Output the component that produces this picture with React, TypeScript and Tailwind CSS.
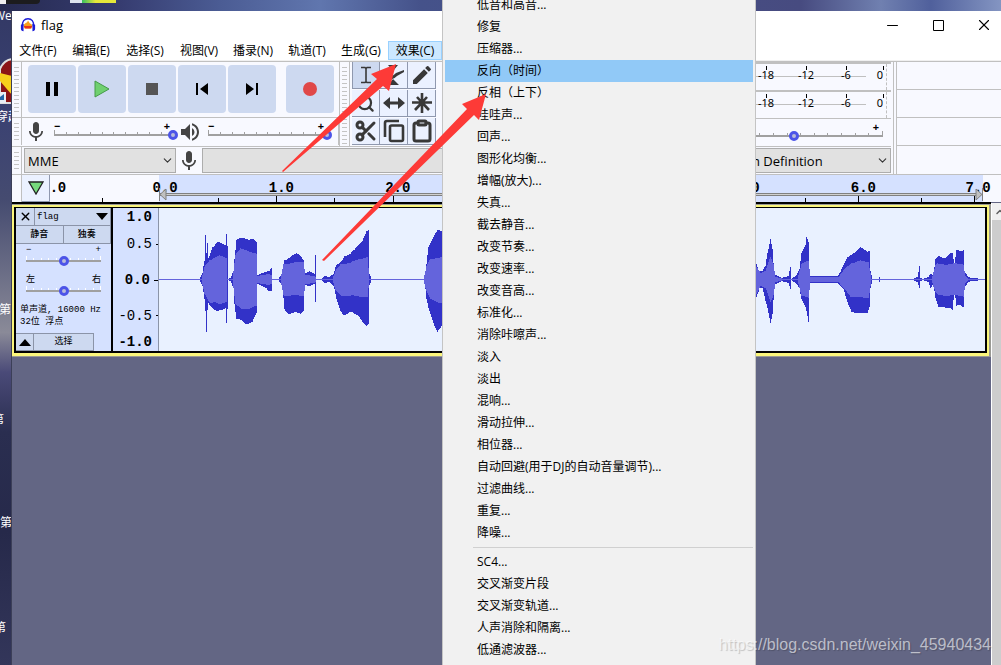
import React from "react";
import { Scissors, Copy, Clipboard, Search, ChevronDown, ChevronUp, Minus, Square, X } from "lucide-react";
import { MdMic, MdVolumeUp, MdEdit } from "react-icons/md";

const menus = ["文件(F)", "编辑(E)", "选择(S)", "视图(V)", "播录(N)", "轨道(T)", "生成(G)", "效果(C)"];

const effects = [
  "低音和高音...",
  "修复",
  "压缩器...",
  "反向（时间）",
  "反相（上下）",
  "哇哇声...",
  "回声...",
  "图形化均衡...",
  "增幅(放大)...",
  "失真...",
  "截去静音...",
  "改变节奏...",
  "改变速率...",
  "改变音高...",
  "标准化...",
  "消除咔嚓声...",
  "淡入",
  "淡出",
  "混响...",
  "滑动拉伸...",
  "相位器...",
  "自动回避(用于DJ的自动音量调节)...",
  "过滤曲线...",
  "重复...",
  "降噪...",
];

const plugins = ["SC4...", "交叉渐变片段", "交叉渐变轨道...", "人声消除和隔离...", "低通滤波器..."];

// [x, height above the centre line, height below it]
type Point = [number, number, number];

const peaks: Point[] = [
  [0, 0, 0], [40, 0, 0], [43, 6, 6], [45, 17, 20], [46, 43, 32], [47, 26, 52], [48, 36, 30], [49, 22, 22],
  [53, 33, 27], [58, 36, 32], [63, 34, 31], [66, 34, 28], [67, 46, 42], [68, 34, 28], [69, 0, 0], [71, 1, 1],
  [74, 8, 8], [75, 20, 24], [77, 38, 40], [86, 41, 43], [93, 41, 41], [97, 36, 34], [98, 4, 4], [103, 6, 6],
  [109, 8, 9], [112, 12, 10], [113, 0, 0], [119, 0, 0], [123, 6, 6], [125, 20, 28], [129, 22, 33], [137, 24, 34],
  [141, 23, 34], [144, 20, 30], [145, 5, 5], [150, 8, 6], [155, 5, 4], [156, 22, 24], [157, 0, 0], [162, 0, 0],
  [165, 3, 3], [170, 2, 2], [174, 5, 6], [177, 13, 20], [181, 18, 30], [185, 24, 34], [191, 24, 33], [195, 28, 35],
  [199, 35, 35], [203, 40, 40], [207, 48, 46], [209, 48, 45], [210, 5, 5], [212, 0, 0], [265, 0, 0], [267, 14, 20],
  [269, 30, 30], [275, 45, 45], [278, 51, 50], [283, 48, 45], [340, 30, 30], [588, 30, 26], [597, 17, 15],
  [600, 8, 8], [603, 8, 8], [606, 12, 22], [608, 24, 30], [611, 39, 44], [613, 30, 34], [615, 4, 4], [619, 3, 3],
  [622, 1, 1], [629, 3, 3], [631, 12, 9], [632, 0, 0], [637, 4, 4], [640, 10, 8], [642, 25, 20], [646, 32, 29],
  [647, 41, 32], [649, 37, 42], [650, 3, 3], [665, 3, 3], [678, 3, 3], [683, 10, 8], [688, 22, 22], [692, 26, 30],
  [701, 30, 35], [708, 28, 32], [710, 30, 25], [711, 8, 8], [713, 0, 0], [719, 0, 0], [720, 2, 2], [721, 0, 0],
  [754, 0, 0], [758, 2, 2], [760, 12, 8], [761, 1, 1], [763, 0, 0], [769, 2, 2], [771, 5, 8], [774, 4, 4],
  [776, 18, 20], [779, 22, 28], [785, 22, 26], [790, 26, 27], [793, 25, 31], [795, 12, 12], [797, 28, 27],
  [801, 28, 25], [804, 30, 26], [805, 8, 8], [808, 3, 3], [811, 1, 1], [817, 1, 1], [820, 0, 0], [826, 0, 0],
];

const rms: Point[] = [
  [0, 0, 0], [42, 0, 0], [45, 12, 14], [50, 19, 22], [56, 22, 22], [60, 23, 25], [67, 21, 22], [68, 0, 0],
  [73, 0, 0], [76, 24, 24], [81, 30, 29], [87, 29, 29], [97, 25, 26], [98, 3, 3], [109, 5, 5], [112, 4, 4],
  [113, 0, 0], [121, 0, 0], [124, 15, 15], [144, 17, 16], [146, 4, 4], [155, 3, 3], [157, 0, 0], [173, 0, 0],
  [176, 8, 10], [181, 15, 15], [191, 16, 16], [199, 20, 16], [208, 22, 17], [210, 0, 0], [264, 0, 0], [267, 12, 12],
  [271, 20, 19], [281, 22, 23], [340, 15, 15], [590, 15, 15], [597, 13, 13], [601, 6, 6], [606, 8, 8], [611, 22, 22],
  [614, 15, 15], [616, 2, 2], [625, 0, 0], [638, 0, 0], [642, 15, 16], [649, 18, 18], [651, 2, 2], [679, 2, 2],
  [683, 7, 7], [691, 16, 16], [701, 18, 18], [709, 17, 18], [712, 0, 0], [772, 0, 0], [776, 13, 13], [778, 15, 15],
  [804, 15, 16], [806, 3, 3], [809, 0, 0], [826, 0, 0],
];

const wavePath = (points: Point[], roughness: number) => {
  const top: string[] = [];
  const bottom: string[] = [];
  let seg = 0;
  for (let x = 0; x < 826; x++) {
    while (seg < points.length - 2 && points[seg + 1][0] <= x) seg++;
    const [x0, u0, d0] = points[seg];
    const [x1, u1, d1] = points[seg + 1];
    const t = (x - x0) / (x1 - x0);
    const up = u0 + (u1 - u0) * t;
    const down = d0 + (d1 - d0) * t;
    const noise = Math.sin(x * 12.9) * roughness;
    const u = Math.max(0, Math.round(up + (up > 8 ? noise : 0)));
    const d = Math.max(0, Math.round(down + (down > 8 ? -noise : 0)));
    top.push(`L${x} ${71 - u}H${x + 1}`);
    bottom.unshift(`L${x + 1} ${72 + d}H${x}`);
  }
  return `M0 71${top.join("")}${bottom.join("")}Z`;
};

interface SliderProps {
  label: string;
  value: number;
  low?: string;
  high?: string;
  ticks?: number;
  className?: string;
  small?: boolean;
}

const Slider: React.FC<SliderProps> = ({ label, value, low = "−", high = "+", ticks = 11, className = "", small }) => {
  return (
    <div className={`flex flex-col ${className}`}>
      <div className={`flex justify-between ${small ? "h-3 text-[9px] leading-3" : "h-2 pr-2 text-[11px] leading-2 font-bold"}`}>
        <span>{low}</span>
        <span>{high}</span>
      </div>
      <div className="relative h-3">
        <div className={`flex h-1.5 items-end justify-between border-b-2 border-[#a0a0a0] ${small ? "" : "mr-1"}`}>
          {Array.from({ length: ticks }, (_, i) => (
            <span
              key={i}
              className={`w-px ${small ? "bg-white" : "bg-[#a0a0a0]"} ${i === 0 || i === ticks - 1 ? "h-1" : "h-0.5"}`}
            />
          ))}
        </div>
        <input
          type="range"
          aria-label={label}
          min={0}
          max={100}
          defaultValue={value}
          className="absolute inset-x-0 top-0 m-0 h-2.5 w-full appearance-none bg-transparent [&::-webkit-slider-thumb]:h-2.5 [&::-webkit-slider-thumb]:w-2.5 [&::-webkit-slider-thumb]:appearance-none [&::-webkit-slider-thumb]:rounded-full [&::-webkit-slider-thumb]:border-3 [&::-webkit-slider-thumb]:border-[#4c54e8] [&::-webkit-slider-thumb]:bg-[#b9bcd8]"
        />
      </div>
    </div>
  );
};

const Grip = () => (
  <div className="flex w-2.5 shrink-0 flex-col border-r border-[#c0c0c0] p-0.5">
    <span className="flex-1 bg-[repeating-linear-gradient(transparent_0_3px,#c4c4c4_3px_4px)]" />
  </div>
);

const TransportButton: React.FC<{ label: string; className?: string; children: React.ReactNode }> = ({
  label,
  className = "",
  children,
}) => (
  <button aria-label={label} className={`flex size-12 items-center justify-center rounded bg-[#cdd9f0] ${className}`}>
    <svg width="20" height="20" viewBox="0 0 20 20">
      {children}
    </svg>
  </button>
);

const ToolButton: React.FC<{ label: string; active?: boolean; children: React.ReactNode }> = ({ label, active, children }) => (
  <button
    aria-label={label}
    className={`flex h-[27px] w-7 items-center justify-center border-r border-b border-[#8f98ae] text-[#383838] ${
      active ? "bg-[#cdd9f0] border-l" : "bg-[#ebf1ff]"
    }`}
  >
    {children}
  </button>
);

const Device: React.FC<{ label: string; value: string; className: string }> = ({ label, value, className }) => (
  <div className={`relative ${className}`}>
    <select
      aria-label={label}
      className="block h-[25px] w-full appearance-none border border-[#adadad] bg-[#e1e1e1] pl-[3px] text-[13px] leading-5"
    >
      <option>{value}</option>
    </select>
    <ChevronDown size={13} strokeWidth={2} className="pointer-events-none absolute top-1.5 right-0.5 text-[#333]" />
  </div>
);

const Meter: React.FC = () => (
  <div className="relative flex h-7 justify-end overflow-hidden border-t-2 border-[#c0c0c0]">
    <div className="mr-1 flex flex-1 justify-end overflow-hidden border-r border-dashed border-[#c0c0c0] font-['Noto_Sans',sans-serif] text-[11px] leading-2.5">
      {["-36", "-30", "-24", "-18", "-12", "-6"].map((db) => (
        <div key={db} className="flex w-10 shrink-0 flex-col items-center">
          <span className="mt-0.5 h-1 w-px shrink-0 bg-black" />
          <span className="w-full bg-[linear-gradient(#c0c0c0,#c0c0c0)] bg-size-[100%_1px] bg-position-[0_6px] bg-no-repeat text-center">
            {db}
          </span>
        </div>
      ))}
      <div className="flex w-5 shrink-0 flex-col items-end pr-0.5">
        <span className="mt-0.5 h-1 w-px shrink-0 bg-black" />
        <span className="mr-px">0</span>
      </div>
    </div>
  </div>
);

const Timeline: React.FC = () => (
  <div className="flex h-7 border-t border-[#c0c0c0] bg-[#f8f9ff]">
    <div className="w-2.5 border-r border-[#c0c0c0]" />
    <button aria-label="播放头" className="flex w-7 items-center justify-center border-r border-b border-[#8f98ae] bg-[#ebf1ff]">
      <svg width="16" height="14" viewBox="0 0 16 14">
        <path d="M1 1H15L8 13Z" fill="#76d97c" stroke="#222" strokeWidth="1.3" />
      </svg>
    </button>
    <svg viewBox="50 175 951 27" preserveAspectRatio="none" className="h-[27px] min-w-0 flex-1">
      <rect x="159" y="175" width="824" height="27" fill="#d5e1ff" />
      <g fontFamily="'Liberation Mono', monospace" fontSize="14" fontWeight="bold" textAnchor="middle">
        <text x="54" y="192">.</text>
        <text x="62" y="192">0</text>
        {[0, 1, 2, 3, 4, 5, 6, 7].map((s) => (
          <text key={s} x={s === 7 ? 978 : 165 + s * 116.4} y="192">{`${s}.0`}</text>
        ))}
      </g>
      <path d="M160 193.5H981M160 195.5H981" stroke="#808080" />
      <path d="M160 194.5H981" stroke="#d0d0d0" />
      <path d="M159.5 188V201M982.5 188V201" stroke="#808080" />
      <path d="M166 189V200L160 194.500ZM976 189V200L982 194.500Z" fill="#c0c0c0" stroke="#808080" />
      <path
        d="M102.500 198V202M218.500 198V202M276.500 196V202M334.500 198V202M393.500 196V202M451.500 198V202M805.500 198V202M858.500 196V202M921.500 198V202M974.500 196V202"
        stroke="#000"
      />
    </svg>
  </div>
);

const TrackPanel: React.FC = () => {
  const cell = "border-r border-b border-[#8b94a8] bg-[#cdd9f0]";
  return (
    <div className="flex w-[97px] shrink-0 flex-col border-r-2 border-black bg-[#d5e1ff] font-['Liberation_Mono','Noto_Sans_CJK_SC',monospace] text-[9px] leading-3">
      <div className="flex h-[18px]">
        <button aria-label="关闭" className={`flex w-[19px] items-center justify-center ${cell}`}>
          <X size={13} strokeWidth={2.5} />
        </button>
        <button className={`flex flex-1 items-center justify-between px-0.5 ${cell}`}>
          flag
          <svg width="12" height="7" viewBox="0 0 12 7">
            <path d="M0 0H12L6 7Z" />
          </svg>
        </button>
      </div>
      <div className="flex h-[18px] font-medium">
        <button className={`flex-1 ${cell}`}>静音</button>
        <button className={`flex-1 ${cell}`}>独奏</button>
      </div>
      <Slider small label="增益" value={50} className="mx-2.5" />
      <Slider small label="声像" value={50} low="左" high="右" className="mx-2.5 mt-1.5" />
      <p className="mt-1.5 pl-1 whitespace-nowrap">
        单声道, 16000 Hz
        <br />
        32位 浮点
      </p>
      <div className="mt-auto flex h-[18px]">
        <button aria-label="折叠" className={`flex w-[18px] items-center justify-center border-t ${cell}`}>
          <svg width="12" height="7" viewBox="0 0 12 7">
            <path d="M0 7H12L6 0Z" />
          </svg>
        </button>
        <button className={`w-[60px] border-t ${cell}`}>选择</button>
      </div>
    </div>
  );
};

const rulerMark = "flex items-center justify-end gap-1";

const Track: React.FC = () => (
  <section className="flex flex-1 border-2 border-b-[3px] border-[#fbf67c] bg-black px-0.5 pt-px pb-0.5">
    <TrackPanel />
    <div className="grid h-[143px] w-[46px] shrink-0 grid-rows-[18px_36px_36px_35px_18px] border-r border-[#8b94a8] bg-[#d5e1ff] font-['Liberation_Mono',monospace] text-sm">
      <div className={`${rulerMark} mr-1.5 font-bold`}>1.0</div>
      <div className={rulerMark}>
        0.5<span className="h-px w-0.5 bg-black" />
      </div>
      <div className={`${rulerMark} font-bold`}>
        0.0<span className="h-px w-1 bg-black" />
      </div>
      <div className={rulerMark}>
        -0.5<span className="h-px w-0.5 bg-black" />
      </div>
      <div className={`${rulerMark} mr-1.5 font-bold`}>-1.0</div>
    </div>
    <svg
      viewBox="0 0 826 143"
      preserveAspectRatio="none"
      shapeRendering="crispEdges"
      className="h-[143px] min-w-0 flex-1 bg-[#e9f1ff]"
    >
      <path d={wavePath(peaks, 1.6)} fill="#3232c8" />
      <path d={wavePath(rms, 0.6)} fill="#6464dc" />
    </svg>
  </section>
);

const Toolbars: React.FC = () => (
  <div className="flex border-t border-[#c0c0c0] bg-[#f8f9ff]">
    <div className="min-w-0 flex-1">
      <div className="flex">
        {/* Transport and mixer */}
        <div className="w-[327px] shrink-0">
          <div className="flex h-[55px]">
            <Grip />
            <div className="flex gap-0.5 py-[3px] pl-1.5">
              <TransportButton label="暂停">
                <path d="M4 3H8V17H4ZM12 3H16V17H12Z" />
              </TransportButton>
              <TransportButton label="播放">
                <path d="M3 2V18L17 10Z" fill="#6fd06f" stroke="#459a49" />
              </TransportButton>
              <TransportButton label="停止">
                <path d="M4 4H16V16H4Z" fill="#555" />
              </TransportButton>
              <TransportButton label="跳至开头">
                <path d="M4 4H6V16H4ZM16 4V16L8 10Z" />
              </TransportButton>
              <TransportButton label="跳至结尾">
                <path d="M14 4H16V16H14ZM4 4V16L12 10Z" />
              </TransportButton>
              <TransportButton label="录制" className="ml-2">
                <circle cx="10" cy="10" r="7" fill="#e04848" />
              </TransportButton>
            </div>
          </div>
          <div className="flex h-7 border-t border-r border-[#c0c0c0]">
            <Grip />
            <MdMic size={24} className="mt-0.5 ml-0.5 shrink-0 text-[#444]" />
            <Slider label="录制音量" value={100} className="mt-1 ml-1.5 w-[124px]" />
            <MdVolumeUp size={24} className="mt-0.5 shrink-0 text-[#444]" />
            <Slider label="播放音量" value={100} className="mt-1 ml-1.5 w-[124px]" />
          </div>
        </div>
        {/* Tools and editing */}
        <div className="flex w-[103px] shrink-0 border-l border-[#c0c0c0]">
          <Grip />
          <div className="grid grid-cols-[28px_28px_28px] content-start gap-y-px pl-0.5">
            <ToolButton label="选择工具" active>
              <svg width="14" height="18" viewBox="0 0 14 18" fill="none" stroke="currentColor" strokeWidth="1.6">
                <path d="M2 1.500H6L7 2.500L8 1.500H12M7 2V16M2 16.500H6L7 15.500L8 16.500H12" />
              </svg>
            </ToolButton>
            <ToolButton label="包络工具">
              <svg width="22" height="22" viewBox="0 0 22 22" fill="currentColor">
                <path d="M5 1H15L10 7ZM5 21L10 15L16 21ZM2 14C7 13 10 12 13 9L21 6V8L14 12C11 15 7 16 2 16Z" />
              </svg>
            </ToolButton>
            <ToolButton label="绘制工具">
              <MdEdit size={24} />
            </ToolButton>
            <ToolButton label="缩放工具">
              <Search size={19} strokeWidth={2.8} />
            </ToolButton>
            <ToolButton label="时间移动工具">
              <svg width="22" height="14" viewBox="0 0 22 14" fill="currentColor">
                <path d="M0 7L7 1V5.500H15V1L22 7L15 13V8.500H7V13Z" />
              </svg>
            </ToolButton>
            <ToolButton label="多功能工具">
              <svg width="20" height="20" viewBox="0 0 20 20" stroke="currentColor" strokeWidth="2.6">
                <path d="M10 0V20M0 9.500H20M3 17L10 9.500L17 17M5 4L10 9.500L15 4" fill="none" />
              </svg>
            </ToolButton>
            <ToolButton label="剪切">
              <Scissors size={24} strokeWidth={3} />
            </ToolButton>
            <ToolButton label="复制">
              <svg width="22" height="24" viewBox="0 0 22 24" fill="none" stroke="currentColor" strokeWidth="2.6">
                <path d="M2 18V4Q2 2 4 2H16" />
                <rect x="7" y="6.500" width="13" height="15.500" rx="1.500" />
              </svg>
            </ToolButton>
            <ToolButton label="粘贴">
              <Clipboard size={24} strokeWidth={3} />
            </ToolButton>
          </div>
        </div>
        {/* Meters and playback speed */}
        <div className="min-w-0 flex-1">
          <Meter />
          <Meter />
          <div className="flex h-7 justify-end border-t border-[#c0c0c0]">
            <Slider label="播放速度" value={49} ticks={14} className="mt-1 mr-1 w-[182px]" />
          </div>
        </div>
      </div>
      {/* Devices */}
      <div className="flex h-7 items-center border-t border-[#c0c0c0]">
        <div className="flex self-stretch">
          <Grip />
        </div>
        <Device label="音频主机" value="MME" className="ml-0.5 w-[152px]" />
        <MdMic size={24} className="mx-px shrink-0 text-[#444]" />
        <Device label="录制设备" value="" className="mr-7 min-w-0 flex-1" />
        <Device label="播放设备" value="High Definition" className="w-[163px]" />
      </div>
    </div>
    <div className="ml-0.5 grid w-[108px] shrink-0 grid-rows-4 divide-y divide-[#c0c0c0] border-l border-[#c0c0c0]">
      {[0, 1, 2, 3].map((i) => (
        <div key={i} className="ml-0.5 border-l border-l-[#c0c0c0]" />
      ))}
    </div>
  </div>
);

const EffectMenu: React.FC = () => (
  <div
    role="menu"
    className="absolute -top-[7px] left-[442px] flex h-[680px] w-[314px] flex-col border border-[#c4c4c4] bg-[#f1f1f1] px-0.5 text-xs"
  >
    {effects.map((name) => (
      <button
        key={name}
        role="menuitem"
        className={`h-[22px] shrink-0 pl-8 text-left ${name === "反向（时间）" ? "bg-[#91c9f7]" : ""}`}
      >
        {name}
      </button>
    ))}
    <hr className="my-[3px] ml-7 border-[#d0d0d0]" />
    {plugins.map((name) => (
      <button key={name} role="menuitem" className="h-[22px] shrink-0 pl-8 text-left">
        {name}
      </button>
    ))}
  </div>
);

const Desktop: React.FC = () => (
  <div className="absolute inset-0 overflow-hidden font-['Open_Sans','Noto_Sans_CJK_SC',sans-serif] text-xs whitespace-nowrap text-white">
    <div className="absolute inset-0 bg-[linear-gradient(#323864,#3b4272_18%,#454b70_30%,#8a8a98_50%,#4a4a78_56%,#2a2e50_65%,#26294a_80%,#33365a)]" />
    <div className="absolute inset-x-0 top-0 h-[11px] bg-[linear-gradient(90deg,#262a50,#363c70_12%,#4b5c94_22%,#6076ae_32%,#45528a_42%,#474b80_80%,#7080b0_88%,#50609c_93%,#8495c2)]" />
    <div className="absolute -top-3 -left-2 h-4 w-12 rounded bg-[#1c1c1e]" />
    <div className="absolute top-0 left-0 h-1 w-1.5 bg-[#eee]" />
    <div className="absolute top-0 left-[70px] h-[3px] w-[46px] border-l-12 border-[#dde4ee] bg-[linear-gradient(90deg,#36c060,#e6e83a_40%)]" />
    <svg className="absolute top-[57px] left-0" width="12" height="50" viewBox="0 0 12 50">
      <path d="M12 2C6 3 2 7 0 12V46H12Z" fill="#8b1416" stroke="#ddd" strokeWidth="2" />
      <path d="M0 16L12 19V38L0 24Z" fill="#f6cf1c" />
      <path d="M0 35H6V46H0Z" fill="#e8eef4" />
      <path d="M0 43V40L4 37V43Z" fill="#2466a8" />
    </svg>
    <span className="absolute top-2 -left-1.5">We</span>
    <span className="absolute top-[109px] -left-1">穿起</span>
    <span className="absolute top-[302px] -left-px">第</span>
    <span className="absolute top-[412px] -left-2">第</span>
    <span className="absolute top-[515px] left-0">第</span>
    <span className="absolute top-[620px] -left-1.5">第</span>
  </div>
);

export default function App() {
  return (
    <div className="relative flex h-screen overflow-hidden bg-[#323864] font-['Open_Sans','Noto_Sans_CJK_SC',sans-serif] text-black">
      <Desktop />
      <main className="relative mt-[11px] ml-[11px] flex min-w-0 flex-1 flex-col border-l border-[#3c3f58] bg-[#636684]">
        <header className="flex h-[30px] shrink-0 items-center bg-white pb-0.5 pl-2">
          <svg width="16" height="16" viewBox="0 0 18 16" className="mr-[5px]">
            <path d="M4 8L6 6L8 5L9 3L11 6L14 8L13 12H5Z" fill="#f7a01c" />
            <path d="M4 9H14L12 12H6Z" fill="#e8331c" />
            <path d="M3 9C2 4 5 1 9 1S16 4 15 9" fill="none" stroke="#1c1cd8" strokeWidth="1.6" />
            <path d="M1 8Q1 7 4 7V15Q1 15 1 12ZM17 8Q17 7 14 7V15Q17 15 17 12Z" fill="#1c1cd8" />
          </svg>
          <h1 className="flex-1 text-[13px] leading-5">flag</h1>
          <div className="flex gap-3">
            <button aria-label="最小化" className="flex w-[34px] items-center justify-center">
              <Minus size={17} strokeWidth={1.6} />
            </button>
            <button aria-label="最大化" className="flex w-[34px] items-center justify-center">
              <svg width="11" height="11" viewBox="0 0 11 11" fill="none" stroke="#000">
                <path d="M0.500 0.500H10.500V10.500H0.500Z" />
              </svg>
            </button>
            <button aria-label="关闭窗口" className="flex w-[34px] items-center justify-center">
              <X size={18} strokeWidth={1.5} />
            </button>
          </div>
        </header>
        <nav className="flex h-5 shrink-0 border-b border-[#f0f0f0] bg-white text-xs">
          {menus.map((name) => (
            <button
              key={name}
              className={`w-[54px] shrink-0 border text-center whitespace-nowrap first:w-[52px] ${
                name === "效果(C)" ? "border-[#99d1ff] bg-[#cce8ff]" : "border-transparent"
              }`}
            >
              {name}
            </button>
          ))}
        </nav>
        <Toolbars />
        <Timeline />
        <div className="mr-2.5 flex border-t-2 border-black">
          <div className="flex min-w-0 flex-1 border-t border-r-2 border-b border-[#9a9a94]">
            <Track />
          </div>
        </div>
        <div className="absolute top-[192px] right-0 bottom-0 flex w-2.5 flex-col border-l border-white bg-[#cdcdcd]">
          <button aria-label="向上滚动" className="flex h-[17px] items-center overflow-hidden bg-[#f0f0f0] pl-0.5">
            <ChevronUp size={12} strokeWidth={3} className="shrink-0 text-[#606060]" />
          </button>
        </div>
      </main>
      <EffectMenu />
      <svg className="pointer-events-none absolute top-0 left-0" width="500" height="270" viewBox="0 0 500 270" fill="#fd3a37">
        <path d="M396 64L371 74L377 79L282 171L283 172L383 86L389 91Z" />
        <path d="M486 94L462 104L467 109L322 260L324 261L474 115L479 120Z" />
      </svg>
      <p className="absolute right-2.5 bottom-2 font-['Liberation_Sans',sans-serif] text-base text-white/60 [text-shadow:1px_1px_1px_#0003]">
        https://blog.csdn.net/weixin_45940434
      </p>
    </div>
  );
}
